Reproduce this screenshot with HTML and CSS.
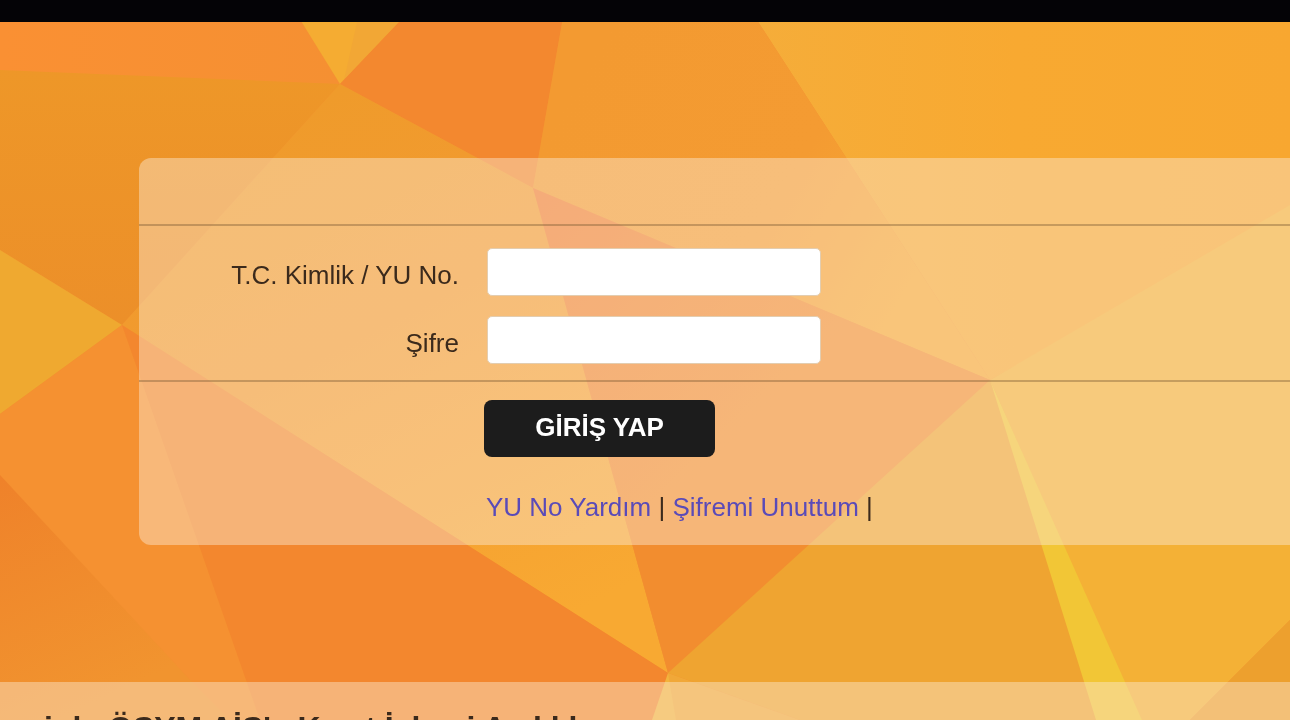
FILE: index.html
```html
<!DOCTYPE html>
<html lang="tr">
<head>
  <meta charset="UTF-8" />
  <meta name="viewport" content="width=device-width, initial-scale=1.0"/>
  <title>ÖSYM AİS - Giriş</title>
  <link rel="stylesheet" href="styles.css">
</head>
<body>
  <!-- Polygon background -->
  <svg class="page-bg" viewBox="0 0 1290 720" preserveAspectRatio="xMidYMid slice" aria-hidden="true">
    <defs>
      <linearGradient id="topShade" x1="0" y1="0" x2="1" y2="0">
        <stop offset="0" stop-color="#fa9033"/>
        <stop offset="1" stop-color="#f59032"/>
      </linearGradient>
      <linearGradient id="leftShade" x1="0" y1="0" x2="0" y2="1">
        <stop offset="0" stop-color="#ee9728"/>
        <stop offset="1" stop-color="#ec8f29"/>
      </linearGradient>
      <linearGradient id="rightShade" gradientUnits="userSpaceOnUse" x1="744" y1="0" x2="1290" y2="0">
        <stop offset="0" stop-color="#f5ad3a"/>
        <stop offset="0.5" stop-color="#f8a931"/>
        <stop offset="1" stop-color="#f8a730"/>
      </linearGradient>
      <linearGradient id="midShade" gradientUnits="userSpaceOnUse" x1="340" y1="90" x2="600" y2="600">
        <stop offset="0" stop-color="#ef9b2b"/>
        <stop offset="0.4" stop-color="#f39a31"/>
        <stop offset="1" stop-color="#f8a932"/>
      </linearGradient>
      <linearGradient id="innerShade" gradientUnits="userSpaceOnUse" x1="566" y1="100" x2="900" y2="300">
        <stop offset="0" stop-color="#f39a31"/>
        <stop offset="0.6" stop-color="#f49b32"/>
        <stop offset="1" stop-color="#f7a833"/>
      </linearGradient>
      <linearGradient id="pinkShade" gradientUnits="userSpaceOnUse" x1="533" y1="188" x2="760" y2="420">
        <stop offset="0" stop-color="#f07a30"/>
        <stop offset="1" stop-color="#f28d2f"/>
      </linearGradient>
      <linearGradient id="lowShade" gradientUnits="userSpaceOnUse" x1="0" y1="480" x2="100" y2="700">
        <stop offset="0" stop-color="#ef822a"/>
        <stop offset="1" stop-color="#f1942f"/>
      </linearGradient>
    </defs>
    <rect width="1290" height="720" fill="#f4902f"/>
    <polygon points="0,0 288,0 340,84 0,72" fill="url(#topShade)"/>
    <polygon points="0,70 340,84 122,325 0,250" fill="url(#leftShade)"/>
    <polygon points="288,0 340,84 420,0" fill="#f5ac32"/>
    <polygon points="362,0 344,80 340,84 420,0" fill="#f2a735"/>
    <polygon points="420,0 340,84 533,188 566,0" fill="#f3882f"/>
    <polygon points="744,0 880,210 990,380 1290,210 1290,0" fill="url(#rightShade)"/>
    <polygon points="566,0 533,188 990,380 880,210 744,0" fill="url(#innerShade)"/>
    <polygon points="340,84 533,188 668,673 122,325" fill="url(#midShade)"/>
    <polygon points="533,188 990,380 800,560 668,673" fill="url(#pinkShade)"/>
    <polygon points="0,250 122,325 0,414" fill="#efa930"/>
    <polygon points="0,414 122,325 250,680 190,680 0,475" fill="#f59131"/>
    <polygon points="0,475 190,680 230,720 0,720" fill="url(#lowShade)"/>
    <polygon points="122,325 668,673 668,720 260,720" fill="#f3872e"/>
    <polygon points="990,380 668,673 800,720 1105,720" fill="#efa431"/>
    <polygon points="990,380 1290,205 1290,620 1190,720 1140,720" fill="#f4b136"/>
    <polygon points="990,380 1096,720 1142,720" fill="#f2c636"/>
    <polygon points="1290,620 1190,720 1290,720" fill="#eda02e"/>
    <polygon points="668,673 800,720 668,720" fill="#f1a838"/>
    <polygon points="668,673 652,720 676,720" fill="#f3b33d"/>
  </svg>

  <header class="top-bar"></header>

  <main>
    <form class="login-box">
      <div class="login-header"></div>
      <div class="login-fields">
        <div class="form-row">
          <label for="tckn">T.C. Kimlik / YU No.</label>
          <input type="text" id="tckn"/>
        </div>
        <div class="form-row">
          <label for="sifre">Şifre</label>
          <input type="password" id="sifre"/>
        </div>
      </div>
      <div class="login-actions">
        <button type="button">GİRİŞ YAP</button>
        <div class="login-links">
          <a href="#">YU No Yardım</a> | <a href="#">Şifremi Unuttum</a> |
        </div>
      </div>
    </form>

    <section class="notice">
      <h2>inle ÖSYM AİS'e Kayıt İşlemi Açıklık</h2>
    </section>
  </main>
</body>
</html>
```

FILE: styles.css
```css
* {
  margin: 0;
  padding: 0;
  box-sizing: border-box;
}
body {
  font-family: 'Liberation Sans', Arial, sans-serif;
  font-size: 26px;
  line-height: 32px;
  color: #3b2a1c;
  background: #f4902f;
  height: 100vh;
  overflow: hidden;
}
.page-bg {
  position: fixed;
  top: 0;
  left: 0;
  width: 100%;
  height: 100%;
  z-index: -1;
}
.top-bar {
  height: 22px;
  background: #040306;
}
.login-box {
  margin: 136px 0 0 139px;
  background: rgba(250,230,208,0.46);
  border-radius: 12px 0 0 12px;
}
.login-header {
  height: 66px;
}
.login-fields {
  display: flex;
  flex-direction: column;
  gap: 20px;
  padding: 22px 0 16px;
  border-top: 2px solid rgba(120,90,50,0.4);
  border-bottom: 2px solid rgba(120,90,50,0.4);
}
.form-row {
  display: flex;
  align-items: center;
  gap: 28px;
}
.form-row label {
  width: 320px;
  padding-top: 6px;
  text-align: right;
}
.form-row input {
  width: 334px;
  height: 48px;
  padding: 0 12px;
  font: inherit;
  background: #fff;
  border: 1px solid #e3cdb0;
  border-radius: 5px;
  outline: none;
}
.login-actions {
  padding: 18px 0 22px 345px;
}
.login-actions button {
  display: block;
  width: 231px;
  height: 57px;
  padding-bottom: 4px;
  font: inherit;
  font-weight: 700;
  color: #fff;
  background: #1c1c1c;
  border: none;
  border-radius: 8px;
  cursor: pointer;
}
.login-links {
  margin: 34px 0 0 2px;
}
.login-links a {
  color: #5a4bb8;
  text-decoration: none;
}
.notice {
  margin-top: 137px;
  padding: 28px 44px;
  background: rgba(250,230,208,0.46);
}
.notice h2 {
  font-size: 32px;
  line-height: 36px;
  white-space: nowrap;
}
```
